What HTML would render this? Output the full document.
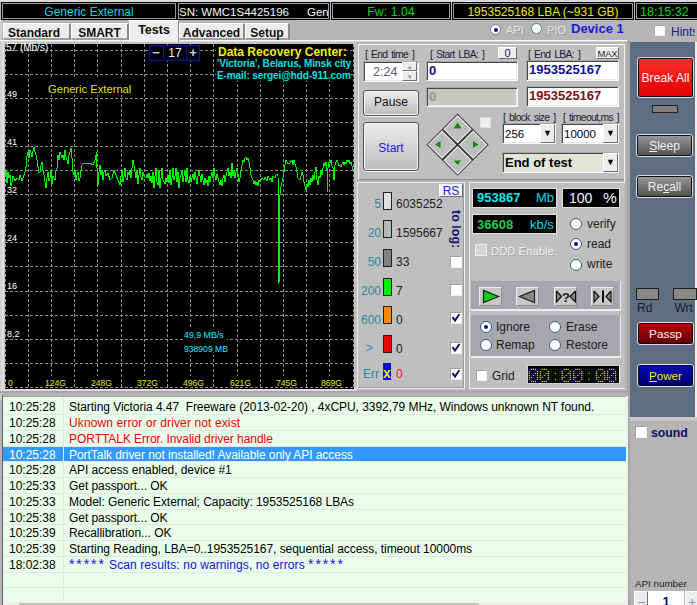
<!DOCTYPE html>
<html><head><meta charset="utf-8">
<style>
*{margin:0;padding:0;box-sizing:border-box}
html,body{width:697px;height:605px;overflow:hidden;background:#b5b5b5;font-family:"Liberation Sans",sans-serif;font-size:12px;color:#000}
.a{position:absolute}
.blk{position:absolute;background:#000;border:1px solid #000;box-shadow:inset 0 0 0 1px #9a9a9a;text-align:center;white-space:nowrap;font-size:12px;line-height:18px}
.tab{position:absolute;top:23px;height:17px;background:#ececec;border-left:1px solid #fff;border-top:1px solid #fff;border-right:2px solid #8a8a8a;border-bottom:2px solid #a0a0a0;font-weight:bold;font-size:12px;line-height:18px;text-align:center;color:#111}
.gl{position:absolute;color:#fff;font-size:9px;line-height:9px;white-space:nowrap}
.xl{position:absolute;color:#e8e800;font-size:8.6px;line-height:15px;height:11px;overflow:hidden;padding:0 1px;background:#000;white-space:nowrap}
.lbl{position:absolute;font-size:10.4px;line-height:12px;color:#1a1a3a;white-space:nowrap;letter-spacing:-0.68px;word-spacing:1.6px;transform:scaleY(1.08);transform-origin:0 100%;margin-top:1px}
.inp{position:absolute;background:#fff;border-top:1px solid #a8a8a8;border-left:1px solid #a8a8a8;border-right:1px solid #fafafa;border-bottom:1px solid #fafafa;box-shadow:inset 1px 1px 0 #484848, inset -1px -1px 0 #e8e8e8}
.btn{position:absolute;border:1px solid #555;border-radius:3px;background:linear-gradient(#ececec,#bcbcbc);box-shadow:inset 0 0 0 1px #f2f2f2, 0 1px 0 #f4f4f4;text-align:center;white-space:nowrap}
.sbtn{position:absolute;background:#ececec;border-left:1px solid #fff;border-top:1px solid #fff;border-right:1px solid #707070;border-bottom:1px solid #707070;text-align:center;font-size:11px;line-height:10px}
.lr{position:absolute;left:3px;width:624px;height:15.75px;border-bottom:1px solid #dfeadf;font-size:12px;line-height:17px;white-space:nowrap}
.lt{position:absolute;left:6px;top:0px}
.lm{position:absolute;left:66px;top:0px;letter-spacing:-0.05px}
.lnum{position:absolute;font-size:12px;line-height:14px;color:#2a8a9a;text-align:right;white-space:nowrap}
.bar{position:absolute;left:383px;width:9px;height:18px;border:1px solid #202020}
.cnt{position:absolute;left:396px;font-size:12px;line-height:14px;color:#202020;white-space:nowrap}
.cb{position:absolute;width:12px;height:12px;background:#fff;border-top:1px solid #a0a0a0;border-left:1px solid #a0a0a0;border-right:1px solid #f0f0f0;border-bottom:1px solid #f0f0f0}
.rd{position:absolute;width:12px;height:12px;border-radius:50%;background:#fff;border:1px solid #3c5a8a}
.rd.on::after{content:"";position:absolute;left:3px;top:3px;width:4px;height:4px;border-radius:50%;background:#101080}
.rtxt{position:absolute;font-size:12px;line-height:14px;color:#202020;white-space:nowrap}
.pb{position:absolute;top:287px;width:23px;height:19px;background:#c8c8c8;border-left:1px solid #f0f0f0;border-top:1px solid #f0f0f0;border-right:1px solid #909090;border-bottom:1px solid #909090}
.rbtn{position:absolute;left:637px;width:57px;border:1px solid #d8dce4;border-radius:3px;box-shadow:inset 0 0 0 1px #101010;text-align:center;white-space:nowrap}
</style></head><body>
<!-- top strip -->
<div class="a" style="left:0;top:0;width:697px;height:2px;background:#dadada"></div>
<div class="a" style="left:0;top:20px;width:2px;height:380px;background:#d0d0d0"></div>
<div class="blk" style="left:1px;top:2px;width:176px;height:18px;color:#00d8d8">Generic External</div>
<div class="blk" style="left:177px;top:2px;width:153px;height:18px;color:#f4f4f4;text-align:left;padding-left:1px;font-size:11.5px">SN: WMC1S4425196<span style="position:absolute;left:129px">Gen</span></div>
<div class="blk" style="left:331px;top:2px;width:120px;height:18px;color:#00d800;font-size:12.4px">Fw: 1.04</div>
<div class="blk" style="left:452px;top:2px;width:182px;height:18px;color:#e8e800">1953525168 LBA (~931 GB)</div>
<div class="blk" style="left:635px;top:2px;width:64px;height:18px;color:#00d800;text-align:left;padding-left:4px;font-size:12.5px">18:15:32</div>

<!-- tabs -->
<div class="tab" style="left:3px;width:68px;padding-right:5px">Standard</div>
<div class="tab" style="left:71px;width:58px">SMART</div>
<div class="tab" style="left:245px;width:45px">Setup</div>
<div class="tab" style="left:179px;width:66px">Advanced</div>
<div class="a" style="left:0;top:40px;width:627px;height:1px;background:#fafafa"></div><div class="a" style="left:0;top:41px;width:627px;height:1px;background:#d4d4d4"></div>
<div class="tab" style="left:129px;top:20px;height:22px;width:50px;border-bottom:none;border-right:1px solid #8a8a8a;background:#eeeeee;line-height:18px;font-size:12.5px">Tests</div>

<!-- API / PIO / Device / Hints -->
<div class="rd on" style="left:490px;top:24px;width:11px;height:11px;border-color:#6a7a9a"></div>
<div class="a" style="left:506px;top:24px;font-size:11px;line-height:12px;color:#e8e8e8;text-shadow:1px 1px 0 #9a9a9a">API</div>
<div class="rd" style="left:531px;top:23px;width:11px;height:11px;border-color:#6a7a9a"></div>
<div class="a" style="left:547px;top:24px;font-size:11px;line-height:12px;color:#e8e8e8;text-shadow:1px 1px 0 #9a9a9a">PIO</div>
<div class="a" style="left:571px;top:22px;font-size:13px;line-height:14px;color:#1a1ae0;font-weight:bold">Device 1</div>
<div class="cb" style="left:654px;top:25px;width:11px;height:11px"></div>
<div class="a" style="left:671px;top:26px;width:24px;overflow:hidden;font-size:12px;line-height:12px;color:#1a1a80;white-space:nowrap">Hints</div>

<!-- graph -->
<div class="a" style="left:3px;top:42px;width:354px;height:349px;background:#c2c2c2"></div><div class="a" style="left:2px;top:42px;width:2px;height:349px;background:#dedede"></div><div class="a" style="left:3px;top:388px;width:354px;height:3px;background:#dcdcdc"></div>
<div class="a" style="left:5px;top:44px;width:349px;height:345px;background:#000"></div>
<svg class="a" style="left:0;top:0" width="697" height="605">
<g stroke="#8e8e8e" stroke-width="1" stroke-dasharray="3,2" fill="none" shape-rendering="crispEdges">
<line x1="5.5" y1="44" x2="5.5" y2="389" />
<line x1="28.5" y1="44" x2="28.5" y2="389" />
<line x1="51.5" y1="44" x2="51.5" y2="389" />
<line x1="74.5" y1="44" x2="74.5" y2="389" />
<line x1="97.5" y1="44" x2="97.5" y2="389" />
<line x1="121.5" y1="44" x2="121.5" y2="389" />
<line x1="144.5" y1="44" x2="144.5" y2="389" />
<line x1="167.5" y1="44" x2="167.5" y2="389" />
<line x1="190.5" y1="44" x2="190.5" y2="389" />
<line x1="213.5" y1="44" x2="213.5" y2="389" />
<line x1="237.5" y1="44" x2="237.5" y2="389" />
<line x1="260.5" y1="44" x2="260.5" y2="389" />
<line x1="283.5" y1="44" x2="283.5" y2="389" />
<line x1="306.5" y1="44" x2="306.5" y2="389" />
<line x1="329.5" y1="44" x2="329.5" y2="389" />
<line x1="353.5" y1="44" x2="353.5" y2="389" />
<line x1="5" y1="50.5" x2="354" y2="50.5" />
<line x1="5" y1="74.5" x2="354" y2="74.5" />
<line x1="5" y1="98.5" x2="354" y2="98.5" />
<line x1="5" y1="122.5" x2="354" y2="122.5" />
<line x1="5" y1="146.5" x2="354" y2="146.5" />
<line x1="5" y1="170.5" x2="354" y2="170.5" />
<line x1="5" y1="194.5" x2="354" y2="194.5" />
<line x1="5" y1="218.5" x2="354" y2="218.5" />
<line x1="5" y1="242.5" x2="354" y2="242.5" />
<line x1="5" y1="266.5" x2="354" y2="266.5" />
<line x1="5" y1="291.5" x2="354" y2="291.5" />
<line x1="5" y1="315.5" x2="354" y2="315.5" />
<line x1="5" y1="339.5" x2="354" y2="339.5" />
<line x1="5" y1="363.5" x2="354" y2="363.5" />
<line x1="5" y1="387.5" x2="354" y2="387.5" />
</g>
<polyline points="5,176 6,170 7,183 8,172 9,178 10,175 11,186 12,182 13,176 15,181 17,178 19,180 20,175 22,181 23,178 25,172 26,167 27,156 28,152 29,158 30,150 31,153 32,157 33,151 34,147 35,152 36,155 37,160 38,167 39,173 40,172 41,165 42,162 43,170 44,175 45,182 46,188 47,178 48,172 49,181 50,178 51,170 52,184 53,176 55,180 56,170 57,168 58,155 59,160 60,152 62,158 63,155 64,160 65,150 66,157 67,160 68,164 69,155 70,152 71,148 72,158 72.5,165 73,172 74,175 75,170 76,180 77,175 78,172 79,181 80,178 81,170 82,165 84,163 87,164 90,163 93,165 95,160 96,155 96.5,152 97,168 98,185 99,172 100,165 101,175 102,170 103,180 104,172 105,170 106,176 108,173 110,180 112,178 114,170 116,175 118,180 120,185 121,176 122,170 123,182 124,176 125,168 126,178 127,180 128,172 129,175 130,170 131,178 132,168 133,160 134,165 135,172 136,178 137,170 138,184 139,175 140,168 141,177 142,180 143,172 144,176 146,178 147,174 148,178 149,173 150,181 151,176 152,183 153,172 154,188 155,176 156,168 157,182 158,185 159,170 160,188 161,178 162,168 163,180 165,184 166,178 167,182 168,175 169,183 170,170 171,185 172,178 173,168 174,180 175,176 176,168 177,182 178,172 179,188 180,178 181,175 182,170 183,182 184,176 185,170 186,182 187,168 188,180 189,183 190,176 191,182 192,178 193,174 194,180 195,172 196,178 197,184 198,176 199,170 200,176 201,182 202,174 203,180 204,185 205,178 206,183 207,180 208,186 209,176 210,182 211,176 212,172 213,178 214,168 215,176 216,180 217,174 218,178 219,182 220,185 221,180 222,186 223,178 224,175 225,182 226,176 227,172 228,168 229,176 230,172 231,178 232,163 233,176 234,170 235,178 236,172 237,168 238,174 239,182 240,178 241,170 242,165 243,160 244,162 245,158 246,157 247,160 248,158 249,162 250,168 251,175 252,178 253,180 254,184 255,181 256,185 257,182 258,186 259,180 260,182 262,178 264,180 265,177 267,181 268,176 270,180 271,178 272,182 273,176 275,178 276,175 277,174 278,176 279,284 280,195 281,186 282,182 283,178 284,172 285,165 286,160 288,164 290,163 292,160 293,165 294,160 295,164 296,167 297,172 298,178 300,180 301,176 302,172 303,175 304,182 305,186 306,190 307,184 308,187 309,180 310,185 311,178 312,182 313,175 314,180 315,172 316,167 317,180 318,185 319,176 320,178 321,170 322,175 323,168 324,163 325,166 326,162 327,170 327.5,192 328,168 329,162 330,163 331,160 332,166 333,168 334,180 335,165 336,162 337,160 338,163 339,166 340,165 341,167 342,164 343,162 344,165 345,162 346,164 347,160 348,162 349,160 350,164 351,162 352,166 353,170" fill="none" stroke="#00f000" stroke-width="1" shape-rendering="crispEdges" />
</svg>
<div class="gl" style="left:6px;top:43px"><span style="font-size:10px">57 (Mb/s)</span></div>
<div class="gl" style="left:7px;top:90px">49</div>
<div class="gl" style="left:7px;top:138px">41</div>
<div class="gl" style="left:7px;top:186px">32</div>
<div class="gl" style="left:7px;top:234px">24</div>
<div class="gl" style="left:7px;top:282px">16</div>
<div class="gl" style="left:7px;top:330px">8,2</div>
<div class="xl" style="left:7px;top:376px">0</div>
<div class="xl" style="left:44px;top:376px">124G</div>
<div class="xl" style="left:90px;top:376px">248G</div>
<div class="xl" style="left:136px;top:376px">372G</div>
<div class="xl" style="left:182px;top:376px">496G</div>
<div class="xl" style="left:229px;top:376px">621G</div>
<div class="xl" style="left:275px;top:376px">745G</div>
<div class="xl" style="left:320px;top:376px">869G</div>
<div class="a" style="left:46px;top:77px;width:86px;height:18px;background:#000"></div><div class="a" style="left:48px;top:83px;font-size:11.2px;line-height:12px;color:#e0e000;white-space:nowrap">Generic External</div>
<div class="a" style="left:149px;top:45px;width:51px;height:16px;border:1px solid #10108a;box-shadow:inset 0 0 0 1px #000050;background:#000"></div>
<div class="a" style="left:163px;top:45px;width:24px;height:16px;border-left:1px solid #10108a;border-right:1px solid #10108a;color:#f4f4f4;font-size:12px;line-height:17px;text-align:center">17</div>
<div class="a" style="left:149px;top:45px;width:14px;height:16px;color:#c8d0e8;font-size:13px;line-height:15px;text-align:center;font-weight:bold">&minus;</div>
<div class="a" style="left:186px;top:45px;width:14px;height:16px;color:#c8d0e8;font-size:13px;line-height:16px;text-align:center;font-weight:bold">+</div>
<div class="a" style="left:216px;top:44px;width:130px;height:14px;background:#000"></div><div class="a" style="left:216px;top:57px;width:135px;height:24px;background:#000"></div><div class="a" style="left:218px;top:46px;font-size:12px;line-height:13px;color:#f0f000;font-weight:bold;white-space:nowrap">Data Recovery Center:</div>
<div class="a" style="left:217px;top:58px;font-size:10px;line-height:11px;color:#00e0e0;font-weight:bold;white-space:nowrap;letter-spacing:-0.1px">'Victoria', Belarus, Minsk city</div>
<div class="a" style="left:217px;top:70px;font-size:10px;line-height:11px;color:#00e0e0;font-weight:bold;white-space:nowrap;letter-spacing:-0.1px">E-mail: sergei@hdd-911.com</div>
<div class="a" style="left:183px;top:329px;width:44px;height:26px;background:#000"></div><div class="a" style="left:184px;top:331px;font-size:8.8px;line-height:9px;color:#10ecff;white-space:nowrap">49,9 MB/s</div>
<div class="a" style="left:184px;top:345px;font-size:8.6px;line-height:9px;color:#10ecff;white-space:nowrap">938909 MB</div>

<!-- controls panel outer -->
<div class="a" style="left:358px;top:44px;width:267px;height:136px;border-left:1px solid #f4f4f4;border-top:1px solid #f4f4f4;border-bottom:1px solid #909090;background:#bfbfbf"></div>
<div class="a" style="left:624px;top:44px;width:1px;height:345px;background:#f0f0f0"></div>
<div class="a" style="left:627px;top:40px;width:3px;height:356px;background:#a8a8a8"></div>

<div class="lbl" style="left:365px;top:48px">[ End time ]</div>
<div class="inp" style="left:363px;top:61px;width:56px;height:21px"></div>
<div class="a" style="left:373px;top:65px;font-size:12.6px;line-height:14px;color:#585870">2:24</div>
<div class="sbtn" style="left:402px;top:62px;width:15px;height:9px;font-size:7px;line-height:8px;color:#909090">&#9652;</div>
<div class="sbtn" style="left:402px;top:71px;width:15px;height:10px;font-size:7px;line-height:9px;color:#909090">&#9662;</div>

<div class="lbl" style="left:430px;top:48px">[ Start LBA: ]</div>
<div class="sbtn" style="left:498px;top:47px;width:19px;height:12px;font-size:11px;line-height:10px;color:#1a1a60">0</div>
<div class="inp" style="left:426px;top:61px;width:92px;height:20px"></div>
<div class="a" style="left:429px;top:63px;font-size:13px;line-height:15px;color:#101090;font-weight:bold">0</div>
<div class="inp" style="left:426px;top:87px;width:92px;height:20px;background:#c8c8c2"></div>
<div class="a" style="left:429px;top:89px;font-size:13px;line-height:15px;color:#909aa0;font-weight:bold">0</div>

<div class="lbl" style="left:528px;top:48px">[ End LBA: ]</div>
<div class="sbtn" style="left:596px;top:47px;width:23px;height:12px;font-size:9.5px;line-height:11px;color:#202040;letter-spacing:-0.2px">MAX</div>
<div class="inp" style="left:526px;top:60px;width:93px;height:21px"></div>
<div class="a" style="left:529px;top:62px;font-size:13px;line-height:15px;color:#101090;font-weight:bold">1953525167</div>
<div class="inp" style="left:526px;top:86px;width:93px;height:21px"></div>
<div class="a" style="left:529px;top:88px;font-size:13px;line-height:15px;color:#801010;font-weight:bold">1953525167</div>

<div class="btn" style="left:363px;top:90px;width:56px;height:26px;font-size:12px;line-height:23px;color:#101020">Pause</div>
<div class="btn" style="left:363px;top:122px;width:56px;height:49px;font-size:12px;line-height:50px;color:#1a1ae8">Start</div>

<!-- diamond -->
<svg class="a" style="left:420px;top:108px" width="76" height="74">
<g transform="translate(37.6,36.7) rotate(45)">
<rect x="-22" y="-22" width="44" height="44" fill="#3a3a3a"/>
<rect x="-20.5" y="-20.5" width="19" height="19" fill="#bdbdbd" stroke="#f4f4f4" stroke-width="1"/>
<rect x="1.5" y="-20.5" width="19" height="19" fill="#bdbdbd" stroke="#f4f4f4" stroke-width="1"/>
<rect x="-20.5" y="1.5" width="19" height="19" fill="#bdbdbd" stroke="#f4f4f4" stroke-width="1"/>
<rect x="1.5" y="1.5" width="19" height="19" fill="#bdbdbd" stroke="#f4f4f4" stroke-width="1"/>
</g>
<polygon points="37.6,14.5 33.6,20.5 41.6,20.5" fill="#108a10"/>
<polygon points="37.6,57 34.1,52.5 41.1,52.5" fill="#108a10"/>
<polygon points="15,36.5 20.5,33 20.5,40" fill="#108a10"/>
<polygon points="58.5,36.5 53,33 53,40" fill="#108a10"/>
</svg>
<div class="cb" style="left:480px;top:117px;width:11px;height:11px;background:#eeeeee;border:1px solid #e0e0e0"></div>

<div class="lbl" style="left:503px;top:111px">[ block size ]</div>
<div class="inp" style="left:502px;top:123px;width:54px;height:21px"></div>
<div class="a" style="left:505px;top:128px;font-size:11.5px;line-height:13px;color:#000">256</div>
<div class="sbtn" style="left:540px;top:124px;width:15px;height:19px;font-size:9px;line-height:17px;color:#000">&#9660;</div>
<div class="lbl" style="left:563px;top:111px">[ timeout,ms ]</div>
<div class="inp" style="left:561px;top:123px;width:58px;height:21px"></div>
<div class="a" style="left:564px;top:128px;font-size:11.5px;line-height:13px;color:#000">10000</div>
<div class="sbtn" style="left:603px;top:124px;width:15px;height:19px;font-size:9px;line-height:17px;color:#000">&#9660;</div>
<div class="inp" style="left:502px;top:152px;width:117px;height:21px;background:#e2e4d8"></div>
<div class="a" style="left:505px;top:155px;font-size:13px;line-height:15px;color:#000;font-weight:bold">End of test</div>
<div class="sbtn" style="left:603px;top:153px;width:15px;height:19px;font-size:9px;line-height:17px;color:#000">&#9660;</div>

<!-- legend panel -->
<div class="a" style="left:357px;top:182px;width:108px;height:207px;border-left:1px solid #ececec;border-top:1px solid #ececec;border-right:1px solid #f0f0f0;border-bottom:1px solid #f0f0f0;background:#bfbfbf;box-shadow:inset -1px -1px 0 #9a9a9a"></div>
<div class="sbtn" style="left:439px;top:184px;width:24px;height:13px;font-size:12px;line-height:12px;color:#1a1ae0;background:#f4f4f4">RS</div>
<div class="lnum" style="left:350px;top:197px;width:31px">5</div>
<div class="bar" style="top:192px;background:#e0e0e0"></div>
<div class="cnt" style="top:197px">6035252</div>
<div class="lnum" style="left:350px;top:226px;width:31px">20</div>
<div class="bar" style="top:220px;background:#b8b8b8"></div>
<div class="cnt" style="top:226px">1595667</div>
<div class="lnum" style="left:350px;top:255px;width:31px">50</div>
<div class="bar" style="top:249px;background:#808080"></div>
<div class="cnt" style="top:255px">33</div>
<div class="lnum" style="left:350px;top:284px;width:31px">200</div>
<div class="bar" style="top:278px;background:#00ee00"></div>
<div class="cnt" style="top:284px">7</div>
<div class="lnum" style="left:350px;top:313px;width:31px">600</div>
<div class="bar" style="top:306px;background:#ff8800"></div>
<div class="cnt" style="top:313px">0</div>
<div class="lnum" style="left:366px;top:341px;text-align:left">&gt;</div>
<div class="bar" style="top:335px;background:#ee0000"></div>
<div class="cnt" style="top:342px">0</div>
<div class="lnum" style="left:349px;top:367px;width:30px">Err</div>
<div class="a" style="left:383px;top:363px;width:8px;height:17px;background:#0a0aee;color:#f0f000;font-weight:bold;font-size:14px;line-height:20px;text-align:center;overflow:hidden;letter-spacing:0">x</div>
<div class="cnt" style="top:367px;color:#e82020">0</div>
<div class="a" style="left:444px;top:222px;width:20px;height:20px;transform:rotate(90deg);transform-origin:0 0"></div>
<div class="a" style="left:463px;top:210px;font-size:12.5px;line-height:14px;color:#14146e;font-weight:bold;transform:rotate(90deg);transform-origin:0 0;white-space:nowrap">to log:</div>
<div class="cb" style="left:450px;top:256px"></div>
<div class="cb" style="left:450px;top:284px"></div>
<div class="cb" style="left:450px;top:312px"></div>
<div class="cb" style="left:450px;top:342px"></div>
<div class="cb" style="left:450px;top:368px"></div>
<svg class="a" style="left:0;top:0" width="697" height="605">
<g fill="none" stroke="#101060" stroke-width="2">
<polyline points="452.5,317 455,320.5 459.5,314"/>
<polyline points="452.5,347 455,350.5 459.5,344"/>
<polyline points="452.5,373 455,376.5 459.5,370"/>
</g>
</svg>

<!-- stats panel -->
<div class="a" style="left:469px;top:182px;width:156px;height:207px;border-left:1px solid #ececec;border-top:1px solid #ececec;border-bottom:1px solid #f0f0f0;background:#bfbfbf"></div>
<div class="blk" style="left:473px;top:189px;width:83px;height:18px;box-shadow:0 0 0 1px #e0e0e0"></div>
<div class="a" style="left:477px;top:190px;font-size:13px;line-height:15px;color:#00e8f0;font-weight:bold">953867</div>
<div class="a" style="left:536px;top:190px;font-size:13px;line-height:15px;color:#00d8e0">Mb</div>
<div class="blk" style="left:563px;top:189px;width:56px;height:18px;box-shadow:0 0 0 1px #e0e0e0"></div>
<div class="a" style="left:569px;top:190px;font-size:14px;line-height:16px;color:#f4f4f4">100</div><div class="a" style="left:603px;top:189px;font-size:15.5px;line-height:17px;color:#f4f4f4">%</div>
<div class="blk" style="left:473px;top:215px;width:83px;height:18px;box-shadow:0 0 0 1px #e0e0e0"></div>
<div class="a" style="left:477px;top:217px;font-size:13px;line-height:15px;color:#28c848;font-weight:bold">36608</div>
<div class="a" style="left:530px;top:217px;font-size:13px;line-height:15px;color:#00d8e0">kb/s</div>
<div class="rd" style="left:570px;top:218px"></div>
<div class="rtxt" style="left:587px;top:217px">verify</div>
<div class="rd on" style="left:570px;top:238px"></div>
<div class="rtxt" style="left:587px;top:237px">read</div>
<div class="rd" style="left:570px;top:259px"></div>
<div class="rtxt" style="left:587px;top:257px">write</div>
<div class="cb" style="left:475px;top:244px;background:#d6d6d6;border:1px solid #ececec;width:12px;height:12px"></div>
<div class="a" style="left:491px;top:244px;font-size:11.3px;line-height:14px;color:#f0f0f0;text-shadow:1px 1px 0 #a8a8a8;white-space:nowrap">DDD Enable</div>

<div class="a" style="left:471px;top:281px;width:150px;height:30px;background:#a6a6ac;border-bottom:2px solid #ececec;border-right:1px solid #ececec"></div>
<div class="pb" style="left:479px"></div>
<div class="pb" style="left:516px"></div>
<div class="pb" style="left:554px"></div>
<div class="pb" style="left:591px"></div>
<svg class="a" style="left:0;top:0" width="697" height="605">
<polygon points="483.5,290.5 483.5,302.5 498.5,296.5" fill="#10d010" stroke="#102010" stroke-width="1.2"/>
<polygon points="534.5,290.5 534.5,302.5 519.5,296.5" fill="#888" stroke="#202020" stroke-width="1.2"/>
<g fill="#8a8a8a" stroke="#101010" stroke-width="1.2">
<polyline points="556.5,291 561.5,296.5 556.5,302 556.5,291"/>
<polyline points="575.5,291 570,296.5 575.5,302 575.5,291"/>
<polyline points="594,291 599,296.5 594,302 594,291"/>
<line x1="603" y1="290.5" x2="603" y2="302.5" stroke-width="2"/>
<polyline points="611,291 606,296.5 611,302 611,291"/>
</g>
<text x="561.8" y="302" font-family="Liberation Sans" font-weight="bold" font-size="13.5" fill="#202020">?</text>
</svg>

<div class="a" style="left:471px;top:315px;width:150px;height:43px;background:#a6a6ac;border-bottom:2px solid #ececec;border-right:1px solid #ececec"></div>
<div class="rd on" style="left:480px;top:321px"></div>
<div class="rtxt" style="left:496px;top:320px">Ignore</div>
<div class="rd" style="left:549px;top:321px"></div>
<div class="rtxt" style="left:566px;top:320px">Erase</div>
<div class="rd" style="left:480px;top:339px"></div>
<div class="rtxt" style="left:496px;top:338px">Remap</div>
<div class="rd" style="left:549px;top:339px"></div>
<div class="rtxt" style="left:566px;top:338px">Restore</div>

<div class="cb" style="left:476px;top:370px;width:11px;height:11px"></div>
<div class="rtxt" style="left:492px;top:369px">Grid</div>
<div class="a" style="left:527px;top:365px;width:93px;height:19px;background:#000;border:1px solid #d0d0d0;border-right-color:#f0f0f0"></div>
<svg class="a" style="left:0;top:0" width="697" height="605"><g fill="#0e2a00"><rect x="528.85" y="368.85" width="1.1" height="1.1"/><rect x="528.85" y="370.85" width="1.1" height="1.1"/><rect x="528.85" y="372.85" width="1.1" height="1.1"/><rect x="528.85" y="374.85" width="1.1" height="1.1"/><rect x="528.85" y="376.85" width="1.1" height="1.1"/><rect x="528.85" y="378.85" width="1.1" height="1.1"/><rect x="528.85" y="380.85" width="1.1" height="1.1"/><rect x="530.85" y="368.85" width="1.1" height="1.1"/><rect x="530.85" y="370.85" width="1.1" height="1.1"/><rect x="530.85" y="372.85" width="1.1" height="1.1"/><rect x="530.85" y="374.85" width="1.1" height="1.1"/><rect x="530.85" y="376.85" width="1.1" height="1.1"/><rect x="530.85" y="378.85" width="1.1" height="1.1"/><rect x="530.85" y="380.85" width="1.1" height="1.1"/><rect x="532.85" y="368.85" width="1.1" height="1.1"/><rect x="532.85" y="370.85" width="1.1" height="1.1"/><rect x="532.85" y="372.85" width="1.1" height="1.1"/><rect x="532.85" y="374.85" width="1.1" height="1.1"/><rect x="532.85" y="376.85" width="1.1" height="1.1"/><rect x="532.85" y="378.85" width="1.1" height="1.1"/><rect x="532.85" y="380.85" width="1.1" height="1.1"/><rect x="534.85" y="368.85" width="1.1" height="1.1"/><rect x="534.85" y="370.85" width="1.1" height="1.1"/><rect x="534.85" y="372.85" width="1.1" height="1.1"/><rect x="534.85" y="374.85" width="1.1" height="1.1"/><rect x="534.85" y="376.85" width="1.1" height="1.1"/><rect x="534.85" y="378.85" width="1.1" height="1.1"/><rect x="534.85" y="380.85" width="1.1" height="1.1"/><rect x="536.85" y="368.85" width="1.1" height="1.1"/><rect x="536.85" y="370.85" width="1.1" height="1.1"/><rect x="536.85" y="372.85" width="1.1" height="1.1"/><rect x="536.85" y="374.85" width="1.1" height="1.1"/><rect x="536.85" y="376.85" width="1.1" height="1.1"/><rect x="536.85" y="378.85" width="1.1" height="1.1"/><rect x="536.85" y="380.85" width="1.1" height="1.1"/><rect x="538.85" y="368.85" width="1.1" height="1.1"/><rect x="538.85" y="370.85" width="1.1" height="1.1"/><rect x="538.85" y="372.85" width="1.1" height="1.1"/><rect x="538.85" y="374.85" width="1.1" height="1.1"/><rect x="538.85" y="376.85" width="1.1" height="1.1"/><rect x="538.85" y="378.85" width="1.1" height="1.1"/><rect x="538.85" y="380.85" width="1.1" height="1.1"/><rect x="540.85" y="368.85" width="1.1" height="1.1"/><rect x="540.85" y="370.85" width="1.1" height="1.1"/><rect x="540.85" y="372.85" width="1.1" height="1.1"/><rect x="540.85" y="374.85" width="1.1" height="1.1"/><rect x="540.85" y="376.85" width="1.1" height="1.1"/><rect x="540.85" y="378.85" width="1.1" height="1.1"/><rect x="540.85" y="380.85" width="1.1" height="1.1"/><rect x="542.85" y="368.85" width="1.1" height="1.1"/><rect x="542.85" y="370.85" width="1.1" height="1.1"/><rect x="542.85" y="372.85" width="1.1" height="1.1"/><rect x="542.85" y="374.85" width="1.1" height="1.1"/><rect x="542.85" y="376.85" width="1.1" height="1.1"/><rect x="542.85" y="378.85" width="1.1" height="1.1"/><rect x="542.85" y="380.85" width="1.1" height="1.1"/><rect x="544.85" y="368.85" width="1.1" height="1.1"/><rect x="544.85" y="370.85" width="1.1" height="1.1"/><rect x="544.85" y="372.85" width="1.1" height="1.1"/><rect x="544.85" y="374.85" width="1.1" height="1.1"/><rect x="544.85" y="376.85" width="1.1" height="1.1"/><rect x="544.85" y="378.85" width="1.1" height="1.1"/><rect x="544.85" y="380.85" width="1.1" height="1.1"/><rect x="546.85" y="368.85" width="1.1" height="1.1"/><rect x="546.85" y="370.85" width="1.1" height="1.1"/><rect x="546.85" y="372.85" width="1.1" height="1.1"/><rect x="546.85" y="374.85" width="1.1" height="1.1"/><rect x="546.85" y="376.85" width="1.1" height="1.1"/><rect x="546.85" y="378.85" width="1.1" height="1.1"/><rect x="546.85" y="380.85" width="1.1" height="1.1"/><rect x="548.85" y="368.85" width="1.1" height="1.1"/><rect x="548.85" y="370.85" width="1.1" height="1.1"/><rect x="548.85" y="372.85" width="1.1" height="1.1"/><rect x="548.85" y="374.85" width="1.1" height="1.1"/><rect x="548.85" y="376.85" width="1.1" height="1.1"/><rect x="548.85" y="378.85" width="1.1" height="1.1"/><rect x="548.85" y="380.85" width="1.1" height="1.1"/><rect x="550.85" y="368.85" width="1.1" height="1.1"/><rect x="550.85" y="370.85" width="1.1" height="1.1"/><rect x="550.85" y="372.85" width="1.1" height="1.1"/><rect x="550.85" y="374.85" width="1.1" height="1.1"/><rect x="550.85" y="376.85" width="1.1" height="1.1"/><rect x="550.85" y="378.85" width="1.1" height="1.1"/><rect x="550.85" y="380.85" width="1.1" height="1.1"/><rect x="552.85" y="368.85" width="1.1" height="1.1"/><rect x="552.85" y="370.85" width="1.1" height="1.1"/><rect x="552.85" y="372.85" width="1.1" height="1.1"/><rect x="552.85" y="374.85" width="1.1" height="1.1"/><rect x="552.85" y="376.85" width="1.1" height="1.1"/><rect x="552.85" y="378.85" width="1.1" height="1.1"/><rect x="552.85" y="380.85" width="1.1" height="1.1"/><rect x="554.85" y="368.85" width="1.1" height="1.1"/><rect x="554.85" y="370.85" width="1.1" height="1.1"/><rect x="554.85" y="372.85" width="1.1" height="1.1"/><rect x="554.85" y="374.85" width="1.1" height="1.1"/><rect x="554.85" y="376.85" width="1.1" height="1.1"/><rect x="554.85" y="378.85" width="1.1" height="1.1"/><rect x="554.85" y="380.85" width="1.1" height="1.1"/><rect x="556.85" y="368.85" width="1.1" height="1.1"/><rect x="556.85" y="370.85" width="1.1" height="1.1"/><rect x="556.85" y="372.85" width="1.1" height="1.1"/><rect x="556.85" y="374.85" width="1.1" height="1.1"/><rect x="556.85" y="376.85" width="1.1" height="1.1"/><rect x="556.85" y="378.85" width="1.1" height="1.1"/><rect x="556.85" y="380.85" width="1.1" height="1.1"/><rect x="558.85" y="368.85" width="1.1" height="1.1"/><rect x="558.85" y="370.85" width="1.1" height="1.1"/><rect x="558.85" y="372.85" width="1.1" height="1.1"/><rect x="558.85" y="374.85" width="1.1" height="1.1"/><rect x="558.85" y="376.85" width="1.1" height="1.1"/><rect x="558.85" y="378.85" width="1.1" height="1.1"/><rect x="558.85" y="380.85" width="1.1" height="1.1"/><rect x="560.85" y="368.85" width="1.1" height="1.1"/><rect x="560.85" y="370.85" width="1.1" height="1.1"/><rect x="560.85" y="372.85" width="1.1" height="1.1"/><rect x="560.85" y="374.85" width="1.1" height="1.1"/><rect x="560.85" y="376.85" width="1.1" height="1.1"/><rect x="560.85" y="378.85" width="1.1" height="1.1"/><rect x="560.85" y="380.85" width="1.1" height="1.1"/><rect x="562.85" y="368.85" width="1.1" height="1.1"/><rect x="562.85" y="370.85" width="1.1" height="1.1"/><rect x="562.85" y="372.85" width="1.1" height="1.1"/><rect x="562.85" y="374.85" width="1.1" height="1.1"/><rect x="562.85" y="376.85" width="1.1" height="1.1"/><rect x="562.85" y="378.85" width="1.1" height="1.1"/><rect x="562.85" y="380.85" width="1.1" height="1.1"/><rect x="564.85" y="368.85" width="1.1" height="1.1"/><rect x="564.85" y="370.85" width="1.1" height="1.1"/><rect x="564.85" y="372.85" width="1.1" height="1.1"/><rect x="564.85" y="374.85" width="1.1" height="1.1"/><rect x="564.85" y="376.85" width="1.1" height="1.1"/><rect x="564.85" y="378.85" width="1.1" height="1.1"/><rect x="564.85" y="380.85" width="1.1" height="1.1"/><rect x="566.85" y="368.85" width="1.1" height="1.1"/><rect x="566.85" y="370.85" width="1.1" height="1.1"/><rect x="566.85" y="372.85" width="1.1" height="1.1"/><rect x="566.85" y="374.85" width="1.1" height="1.1"/><rect x="566.85" y="376.85" width="1.1" height="1.1"/><rect x="566.85" y="378.85" width="1.1" height="1.1"/><rect x="566.85" y="380.85" width="1.1" height="1.1"/><rect x="568.85" y="368.85" width="1.1" height="1.1"/><rect x="568.85" y="370.85" width="1.1" height="1.1"/><rect x="568.85" y="372.85" width="1.1" height="1.1"/><rect x="568.85" y="374.85" width="1.1" height="1.1"/><rect x="568.85" y="376.85" width="1.1" height="1.1"/><rect x="568.85" y="378.85" width="1.1" height="1.1"/><rect x="568.85" y="380.85" width="1.1" height="1.1"/><rect x="570.85" y="368.85" width="1.1" height="1.1"/><rect x="570.85" y="370.85" width="1.1" height="1.1"/><rect x="570.85" y="372.85" width="1.1" height="1.1"/><rect x="570.85" y="374.85" width="1.1" height="1.1"/><rect x="570.85" y="376.85" width="1.1" height="1.1"/><rect x="570.85" y="378.85" width="1.1" height="1.1"/><rect x="570.85" y="380.85" width="1.1" height="1.1"/><rect x="572.85" y="368.85" width="1.1" height="1.1"/><rect x="572.85" y="370.85" width="1.1" height="1.1"/><rect x="572.85" y="372.85" width="1.1" height="1.1"/><rect x="572.85" y="374.85" width="1.1" height="1.1"/><rect x="572.85" y="376.85" width="1.1" height="1.1"/><rect x="572.85" y="378.85" width="1.1" height="1.1"/><rect x="572.85" y="380.85" width="1.1" height="1.1"/><rect x="574.85" y="368.85" width="1.1" height="1.1"/><rect x="574.85" y="370.85" width="1.1" height="1.1"/><rect x="574.85" y="372.85" width="1.1" height="1.1"/><rect x="574.85" y="374.85" width="1.1" height="1.1"/><rect x="574.85" y="376.85" width="1.1" height="1.1"/><rect x="574.85" y="378.85" width="1.1" height="1.1"/><rect x="574.85" y="380.85" width="1.1" height="1.1"/><rect x="576.85" y="368.85" width="1.1" height="1.1"/><rect x="576.85" y="370.85" width="1.1" height="1.1"/><rect x="576.85" y="372.85" width="1.1" height="1.1"/><rect x="576.85" y="374.85" width="1.1" height="1.1"/><rect x="576.85" y="376.85" width="1.1" height="1.1"/><rect x="576.85" y="378.85" width="1.1" height="1.1"/><rect x="576.85" y="380.85" width="1.1" height="1.1"/><rect x="578.85" y="368.85" width="1.1" height="1.1"/><rect x="578.85" y="370.85" width="1.1" height="1.1"/><rect x="578.85" y="372.85" width="1.1" height="1.1"/><rect x="578.85" y="374.85" width="1.1" height="1.1"/><rect x="578.85" y="376.85" width="1.1" height="1.1"/><rect x="578.85" y="378.85" width="1.1" height="1.1"/><rect x="578.85" y="380.85" width="1.1" height="1.1"/><rect x="580.85" y="368.85" width="1.1" height="1.1"/><rect x="580.85" y="370.85" width="1.1" height="1.1"/><rect x="580.85" y="372.85" width="1.1" height="1.1"/><rect x="580.85" y="374.85" width="1.1" height="1.1"/><rect x="580.85" y="376.85" width="1.1" height="1.1"/><rect x="580.85" y="378.85" width="1.1" height="1.1"/><rect x="580.85" y="380.85" width="1.1" height="1.1"/><rect x="582.85" y="368.85" width="1.1" height="1.1"/><rect x="582.85" y="370.85" width="1.1" height="1.1"/><rect x="582.85" y="372.85" width="1.1" height="1.1"/><rect x="582.85" y="374.85" width="1.1" height="1.1"/><rect x="582.85" y="376.85" width="1.1" height="1.1"/><rect x="582.85" y="378.85" width="1.1" height="1.1"/><rect x="582.85" y="380.85" width="1.1" height="1.1"/><rect x="584.85" y="368.85" width="1.1" height="1.1"/><rect x="584.85" y="370.85" width="1.1" height="1.1"/><rect x="584.85" y="372.85" width="1.1" height="1.1"/><rect x="584.85" y="374.85" width="1.1" height="1.1"/><rect x="584.85" y="376.85" width="1.1" height="1.1"/><rect x="584.85" y="378.85" width="1.1" height="1.1"/><rect x="584.85" y="380.85" width="1.1" height="1.1"/><rect x="586.85" y="368.85" width="1.1" height="1.1"/><rect x="586.85" y="370.85" width="1.1" height="1.1"/><rect x="586.85" y="372.85" width="1.1" height="1.1"/><rect x="586.85" y="374.85" width="1.1" height="1.1"/><rect x="586.85" y="376.85" width="1.1" height="1.1"/><rect x="586.85" y="378.85" width="1.1" height="1.1"/><rect x="586.85" y="380.85" width="1.1" height="1.1"/><rect x="588.85" y="368.85" width="1.1" height="1.1"/><rect x="588.85" y="370.85" width="1.1" height="1.1"/><rect x="588.85" y="372.85" width="1.1" height="1.1"/><rect x="588.85" y="374.85" width="1.1" height="1.1"/><rect x="588.85" y="376.85" width="1.1" height="1.1"/><rect x="588.85" y="378.85" width="1.1" height="1.1"/><rect x="588.85" y="380.85" width="1.1" height="1.1"/><rect x="590.85" y="368.85" width="1.1" height="1.1"/><rect x="590.85" y="370.85" width="1.1" height="1.1"/><rect x="590.85" y="372.85" width="1.1" height="1.1"/><rect x="590.85" y="374.85" width="1.1" height="1.1"/><rect x="590.85" y="376.85" width="1.1" height="1.1"/><rect x="590.85" y="378.85" width="1.1" height="1.1"/><rect x="590.85" y="380.85" width="1.1" height="1.1"/><rect x="592.85" y="368.85" width="1.1" height="1.1"/><rect x="592.85" y="370.85" width="1.1" height="1.1"/><rect x="592.85" y="372.85" width="1.1" height="1.1"/><rect x="592.85" y="374.85" width="1.1" height="1.1"/><rect x="592.85" y="376.85" width="1.1" height="1.1"/><rect x="592.85" y="378.85" width="1.1" height="1.1"/><rect x="592.85" y="380.85" width="1.1" height="1.1"/><rect x="594.85" y="368.85" width="1.1" height="1.1"/><rect x="594.85" y="370.85" width="1.1" height="1.1"/><rect x="594.85" y="372.85" width="1.1" height="1.1"/><rect x="594.85" y="374.85" width="1.1" height="1.1"/><rect x="594.85" y="376.85" width="1.1" height="1.1"/><rect x="594.85" y="378.85" width="1.1" height="1.1"/><rect x="594.85" y="380.85" width="1.1" height="1.1"/><rect x="596.85" y="368.85" width="1.1" height="1.1"/><rect x="596.85" y="370.85" width="1.1" height="1.1"/><rect x="596.85" y="372.85" width="1.1" height="1.1"/><rect x="596.85" y="374.85" width="1.1" height="1.1"/><rect x="596.85" y="376.85" width="1.1" height="1.1"/><rect x="596.85" y="378.85" width="1.1" height="1.1"/><rect x="596.85" y="380.85" width="1.1" height="1.1"/><rect x="598.85" y="368.85" width="1.1" height="1.1"/><rect x="598.85" y="370.85" width="1.1" height="1.1"/><rect x="598.85" y="372.85" width="1.1" height="1.1"/><rect x="598.85" y="374.85" width="1.1" height="1.1"/><rect x="598.85" y="376.85" width="1.1" height="1.1"/><rect x="598.85" y="378.85" width="1.1" height="1.1"/><rect x="598.85" y="380.85" width="1.1" height="1.1"/><rect x="600.85" y="368.85" width="1.1" height="1.1"/><rect x="600.85" y="370.85" width="1.1" height="1.1"/><rect x="600.85" y="372.85" width="1.1" height="1.1"/><rect x="600.85" y="374.85" width="1.1" height="1.1"/><rect x="600.85" y="376.85" width="1.1" height="1.1"/><rect x="600.85" y="378.85" width="1.1" height="1.1"/><rect x="600.85" y="380.85" width="1.1" height="1.1"/><rect x="602.85" y="368.85" width="1.1" height="1.1"/><rect x="602.85" y="370.85" width="1.1" height="1.1"/><rect x="602.85" y="372.85" width="1.1" height="1.1"/><rect x="602.85" y="374.85" width="1.1" height="1.1"/><rect x="602.85" y="376.85" width="1.1" height="1.1"/><rect x="602.85" y="378.85" width="1.1" height="1.1"/><rect x="602.85" y="380.85" width="1.1" height="1.1"/><rect x="604.85" y="368.85" width="1.1" height="1.1"/><rect x="604.85" y="370.85" width="1.1" height="1.1"/><rect x="604.85" y="372.85" width="1.1" height="1.1"/><rect x="604.85" y="374.85" width="1.1" height="1.1"/><rect x="604.85" y="376.85" width="1.1" height="1.1"/><rect x="604.85" y="378.85" width="1.1" height="1.1"/><rect x="604.85" y="380.85" width="1.1" height="1.1"/><rect x="606.85" y="368.85" width="1.1" height="1.1"/><rect x="606.85" y="370.85" width="1.1" height="1.1"/><rect x="606.85" y="372.85" width="1.1" height="1.1"/><rect x="606.85" y="374.85" width="1.1" height="1.1"/><rect x="606.85" y="376.85" width="1.1" height="1.1"/><rect x="606.85" y="378.85" width="1.1" height="1.1"/><rect x="606.85" y="380.85" width="1.1" height="1.1"/><rect x="608.85" y="368.85" width="1.1" height="1.1"/><rect x="608.85" y="370.85" width="1.1" height="1.1"/><rect x="608.85" y="372.85" width="1.1" height="1.1"/><rect x="608.85" y="374.85" width="1.1" height="1.1"/><rect x="608.85" y="376.85" width="1.1" height="1.1"/><rect x="608.85" y="378.85" width="1.1" height="1.1"/><rect x="608.85" y="380.85" width="1.1" height="1.1"/><rect x="610.85" y="368.85" width="1.1" height="1.1"/><rect x="610.85" y="370.85" width="1.1" height="1.1"/><rect x="610.85" y="372.85" width="1.1" height="1.1"/><rect x="610.85" y="374.85" width="1.1" height="1.1"/><rect x="610.85" y="376.85" width="1.1" height="1.1"/><rect x="610.85" y="378.85" width="1.1" height="1.1"/><rect x="610.85" y="380.85" width="1.1" height="1.1"/><rect x="612.85" y="368.85" width="1.1" height="1.1"/><rect x="612.85" y="370.85" width="1.1" height="1.1"/><rect x="612.85" y="372.85" width="1.1" height="1.1"/><rect x="612.85" y="374.85" width="1.1" height="1.1"/><rect x="612.85" y="376.85" width="1.1" height="1.1"/><rect x="612.85" y="378.85" width="1.1" height="1.1"/><rect x="612.85" y="380.85" width="1.1" height="1.1"/><rect x="614.85" y="368.85" width="1.1" height="1.1"/><rect x="614.85" y="370.85" width="1.1" height="1.1"/><rect x="614.85" y="372.85" width="1.1" height="1.1"/><rect x="614.85" y="374.85" width="1.1" height="1.1"/><rect x="614.85" y="376.85" width="1.1" height="1.1"/><rect x="614.85" y="378.85" width="1.1" height="1.1"/><rect x="614.85" y="380.85" width="1.1" height="1.1"/><rect x="616.85" y="368.85" width="1.1" height="1.1"/><rect x="616.85" y="370.85" width="1.1" height="1.1"/><rect x="616.85" y="372.85" width="1.1" height="1.1"/><rect x="616.85" y="374.85" width="1.1" height="1.1"/><rect x="616.85" y="376.85" width="1.1" height="1.1"/><rect x="616.85" y="378.85" width="1.1" height="1.1"/><rect x="616.85" y="380.85" width="1.1" height="1.1"/></g><g fill="#d8c800"><rect x="530.80" y="368.80" width="1.3" height="1.3"/><rect x="532.80" y="368.80" width="1.3" height="1.3"/><rect x="534.80" y="368.80" width="1.3" height="1.3"/><rect x="528.80" y="370.80" width="1.3" height="1.3"/><rect x="536.80" y="370.80" width="1.3" height="1.3"/><rect x="528.80" y="372.80" width="1.3" height="1.3"/><rect x="534.80" y="372.80" width="1.3" height="1.3"/><rect x="536.80" y="372.80" width="1.3" height="1.3"/><rect x="528.80" y="374.80" width="1.3" height="1.3"/><rect x="532.80" y="374.80" width="1.3" height="1.3"/><rect x="536.80" y="374.80" width="1.3" height="1.3"/><rect x="528.80" y="376.80" width="1.3" height="1.3"/><rect x="530.80" y="376.80" width="1.3" height="1.3"/><rect x="536.80" y="376.80" width="1.3" height="1.3"/><rect x="528.80" y="378.80" width="1.3" height="1.3"/><rect x="536.80" y="378.80" width="1.3" height="1.3"/><rect x="530.80" y="380.80" width="1.3" height="1.3"/><rect x="532.80" y="380.80" width="1.3" height="1.3"/><rect x="534.80" y="380.80" width="1.3" height="1.3"/><rect x="541.70" y="368.80" width="1.3" height="1.3"/><rect x="543.70" y="368.80" width="1.3" height="1.3"/><rect x="545.70" y="368.80" width="1.3" height="1.3"/><rect x="539.70" y="370.80" width="1.3" height="1.3"/><rect x="547.70" y="370.80" width="1.3" height="1.3"/><rect x="539.70" y="372.80" width="1.3" height="1.3"/><rect x="545.70" y="372.80" width="1.3" height="1.3"/><rect x="547.70" y="372.80" width="1.3" height="1.3"/><rect x="539.70" y="374.80" width="1.3" height="1.3"/><rect x="543.70" y="374.80" width="1.3" height="1.3"/><rect x="547.70" y="374.80" width="1.3" height="1.3"/><rect x="539.70" y="376.80" width="1.3" height="1.3"/><rect x="541.70" y="376.80" width="1.3" height="1.3"/><rect x="547.70" y="376.80" width="1.3" height="1.3"/><rect x="539.70" y="378.80" width="1.3" height="1.3"/><rect x="547.70" y="378.80" width="1.3" height="1.3"/><rect x="541.70" y="380.80" width="1.3" height="1.3"/><rect x="543.70" y="380.80" width="1.3" height="1.3"/><rect x="545.70" y="380.80" width="1.3" height="1.3"/><rect x="563.60" y="368.80" width="1.3" height="1.3"/><rect x="565.60" y="368.80" width="1.3" height="1.3"/><rect x="567.60" y="368.80" width="1.3" height="1.3"/><rect x="561.60" y="370.80" width="1.3" height="1.3"/><rect x="569.60" y="370.80" width="1.3" height="1.3"/><rect x="561.60" y="372.80" width="1.3" height="1.3"/><rect x="567.60" y="372.80" width="1.3" height="1.3"/><rect x="569.60" y="372.80" width="1.3" height="1.3"/><rect x="561.60" y="374.80" width="1.3" height="1.3"/><rect x="565.60" y="374.80" width="1.3" height="1.3"/><rect x="569.60" y="374.80" width="1.3" height="1.3"/><rect x="561.60" y="376.80" width="1.3" height="1.3"/><rect x="563.60" y="376.80" width="1.3" height="1.3"/><rect x="569.60" y="376.80" width="1.3" height="1.3"/><rect x="561.60" y="378.80" width="1.3" height="1.3"/><rect x="569.60" y="378.80" width="1.3" height="1.3"/><rect x="563.60" y="380.80" width="1.3" height="1.3"/><rect x="565.60" y="380.80" width="1.3" height="1.3"/><rect x="567.60" y="380.80" width="1.3" height="1.3"/><rect x="575.10" y="368.80" width="1.3" height="1.3"/><rect x="577.10" y="368.80" width="1.3" height="1.3"/><rect x="579.10" y="368.80" width="1.3" height="1.3"/><rect x="573.10" y="370.80" width="1.3" height="1.3"/><rect x="581.10" y="370.80" width="1.3" height="1.3"/><rect x="573.10" y="372.80" width="1.3" height="1.3"/><rect x="579.10" y="372.80" width="1.3" height="1.3"/><rect x="581.10" y="372.80" width="1.3" height="1.3"/><rect x="573.10" y="374.80" width="1.3" height="1.3"/><rect x="577.10" y="374.80" width="1.3" height="1.3"/><rect x="581.10" y="374.80" width="1.3" height="1.3"/><rect x="573.10" y="376.80" width="1.3" height="1.3"/><rect x="575.10" y="376.80" width="1.3" height="1.3"/><rect x="581.10" y="376.80" width="1.3" height="1.3"/><rect x="573.10" y="378.80" width="1.3" height="1.3"/><rect x="581.10" y="378.80" width="1.3" height="1.3"/><rect x="575.10" y="380.80" width="1.3" height="1.3"/><rect x="577.10" y="380.80" width="1.3" height="1.3"/><rect x="579.10" y="380.80" width="1.3" height="1.3"/><rect x="597.90" y="368.80" width="1.3" height="1.3"/><rect x="599.90" y="368.80" width="1.3" height="1.3"/><rect x="601.90" y="368.80" width="1.3" height="1.3"/><rect x="595.90" y="370.80" width="1.3" height="1.3"/><rect x="603.90" y="370.80" width="1.3" height="1.3"/><rect x="595.90" y="372.80" width="1.3" height="1.3"/><rect x="601.90" y="372.80" width="1.3" height="1.3"/><rect x="603.90" y="372.80" width="1.3" height="1.3"/><rect x="595.90" y="374.80" width="1.3" height="1.3"/><rect x="599.90" y="374.80" width="1.3" height="1.3"/><rect x="603.90" y="374.80" width="1.3" height="1.3"/><rect x="595.90" y="376.80" width="1.3" height="1.3"/><rect x="597.90" y="376.80" width="1.3" height="1.3"/><rect x="603.90" y="376.80" width="1.3" height="1.3"/><rect x="595.90" y="378.80" width="1.3" height="1.3"/><rect x="603.90" y="378.80" width="1.3" height="1.3"/><rect x="597.90" y="380.80" width="1.3" height="1.3"/><rect x="599.90" y="380.80" width="1.3" height="1.3"/><rect x="601.90" y="380.80" width="1.3" height="1.3"/><rect x="608.90" y="368.80" width="1.3" height="1.3"/><rect x="610.90" y="368.80" width="1.3" height="1.3"/><rect x="612.90" y="368.80" width="1.3" height="1.3"/><rect x="606.90" y="370.80" width="1.3" height="1.3"/><rect x="614.90" y="370.80" width="1.3" height="1.3"/><rect x="606.90" y="372.80" width="1.3" height="1.3"/><rect x="612.90" y="372.80" width="1.3" height="1.3"/><rect x="614.90" y="372.80" width="1.3" height="1.3"/><rect x="606.90" y="374.80" width="1.3" height="1.3"/><rect x="610.90" y="374.80" width="1.3" height="1.3"/><rect x="614.90" y="374.80" width="1.3" height="1.3"/><rect x="606.90" y="376.80" width="1.3" height="1.3"/><rect x="608.90" y="376.80" width="1.3" height="1.3"/><rect x="614.90" y="376.80" width="1.3" height="1.3"/><rect x="606.90" y="378.80" width="1.3" height="1.3"/><rect x="614.90" y="378.80" width="1.3" height="1.3"/><rect x="608.90" y="380.80" width="1.3" height="1.3"/><rect x="610.90" y="380.80" width="1.3" height="1.3"/><rect x="612.90" y="380.80" width="1.3" height="1.3"/><rect x="554.80" y="372.80" width="1.3" height="1.3"/><rect x="554.80" y="378.80" width="1.3" height="1.3"/><rect x="588.40" y="372.80" width="1.3" height="1.3"/><rect x="588.40" y="378.80" width="1.3" height="1.3"/></g></svg>

<!-- right dark panel -->
<div class="a" style="left:630px;top:42px;width:65px;height:375px;background:#5e6e82"></div>
<div class="a" style="left:695px;top:42px;width:2px;height:375px;background:#ececec"></div>
<div class="rbtn" style="top:57px;height:41px;background:linear-gradient(#ff3030,#e00000);color:#f4f4f4;font-size:12.2px;line-height:40px">Break All</div>
<div class="a" style="left:652px;top:105px;width:26px;height:8px;background:#808080;border:1px solid #202020"></div>
<div class="rbtn" style="left:636px;top:134px;height:23px;background:linear-gradient(#9a9a9a,#505050);color:#f0f0f0;font-size:12px;line-height:22px"><u>S</u>leep</div>
<div class="rbtn" style="left:636px;top:175px;height:23px;background:linear-gradient(#9a9a9a,#505050);color:#f0f0f0;font-size:12px;line-height:22px">Re<u>c</u>all</div>
<div class="a" style="left:636px;top:288px;width:23px;height:12px;background:#888;border:1px solid #202020"></div>
<div class="a" style="left:673px;top:288px;width:24px;height:12px;background:#888;border:1px solid #202020"></div>
<div class="a" style="left:637px;top:302px;font-size:12px;line-height:13px;color:#181c28">Rd</div>
<div class="a" style="left:674.5px;top:302px;font-size:12px;line-height:13px;color:#181c28">Wrt</div>
<div class="rbtn" style="top:322px;height:23px;background:linear-gradient(#b80808,#600000);color:#f4f4f4;font-size:11.8px;line-height:22px">Passp</div>
<div class="rbtn" style="top:364px;height:23px;background:linear-gradient(#0808b8,#000068);color:#f0f000;font-size:11.6px;line-height:22px"><u>P</u>ower</div>

<!-- log -->
<div class="a" style="left:0;top:391px;width:627px;height:2px;background:#a4a4a4"></div>
<div class="a" style="left:2px;top:395px;width:1px;height:210px;background:#606060"></div>
<div class="a" style="left:3px;top:396px;width:624px;height:207px;background:#eafdea"></div>
<div class="a" style="left:63px;top:396px;width:1px;height:207px;background:#dfeadf"></div>
<div class="lr" style="top:399.4px;"><span class="lt" style="color:#000">10:25:28</span><span class="lm" style="color:#000">Starting Victoria 4.47&nbsp; Freeware (2013-02-20) , 4xCPU, 3392,79 MHz, Windows unknown NT found.</span></div>
<div class="lr" style="top:415.1px;"><span class="lt" style="color:#000">10:25:28</span><span class="lm" style="color:#f00000"><span style="letter-spacing:0.12px">Uknown error or driver not exist</span></span></div>
<div class="lr" style="top:430.9px;"><span class="lt" style="color:#000">10:25:28</span><span class="lm" style="color:#f00000">PORTTALK Error. Invalid driver handle</span></div>
<div class="lr" style="top:446.6px;background:#3399ff;"><span class="lt" style="color:#fff">10:25:28</span><span class="lm" style="color:#fff">PortTalk driver not installed! Available only API access</span></div>
<div class="lr" style="top:462.4px;"><span class="lt" style="color:#000">10:25:28</span><span class="lm" style="color:#000">API access enabled, device #1</span></div>
<div class="lr" style="top:478.1px;"><span class="lt" style="color:#000">10:25:33</span><span class="lm" style="color:#000">Get passport... OK</span></div>
<div class="lr" style="top:493.9px;"><span class="lt" style="color:#000">10:25:33</span><span class="lm" style="color:#000">Model: Generic External; Capacity: 1953525168 LBAs</span></div>
<div class="lr" style="top:509.6px;"><span class="lt" style="color:#000">10:25:38</span><span class="lm" style="color:#000">Get passport... OK</span></div>
<div class="lr" style="top:525.4px;"><span class="lt" style="color:#000">10:25:39</span><span class="lm" style="color:#000">Recallibration... OK</span></div>
<div class="lr" style="top:541.1px;"><span class="lt" style="color:#000">10:25:39</span><span class="lm" style="color:#000">Starting Reading, LBA=0..1953525167, sequential access, timeout 10000ms</span></div>
<div class="lr" style="top:556.9px;"><span class="lt" style="color:#000">18:02:38</span><span class="lm" style="color:#1010e0"><span style="letter-spacing:1.9px;font-size:14px;line-height:10px">*****</span> <span style="letter-spacing:0.1px">Scan results: no warnings, no errors</span> <span style="letter-spacing:1.9px;font-size:14px;line-height:10px">*****</span></span></div>
<div class="lr" style="top:572.6px;"><span class="lt" style="color:#000"></span><span class="lm" style="color:"></span></div>
<div class="lr" style="top:588.4px;"><span class="lt" style="color:#000"></span><span class="lm" style="color:"></span></div>
<div class="a" style="left:63px;top:397px;width:1px;height:206px;background:#dfeadf"></div>
<div class="a" style="left:3px;top:602px;width:624px;height:3px;background:#f0f0f0"></div>
<div class="a" style="left:19px;top:603px;width:460px;height:2px;background:#c4c4c4"></div>

<!-- bottom right panel -->
<div class="a" style="left:626px;top:396px;width:2px;height:209px;background:#f0f0f0"></div><div class="a" style="left:628px;top:396px;width:2px;height:209px;background:#a4a4a4"></div><div class="a" style="left:3px;top:396px;width:623px;height:1px;background:#a0a0a0"></div>
<div class="a" style="left:630px;top:417px;width:67px;height:4px;background:#c8c8c8"></div>
<div class="cb" style="left:635px;top:426px;width:12px;height:12px"></div>
<div class="a" style="left:651px;top:426px;font-size:12.3px;line-height:14px;color:#10106e;font-weight:bold">sound</div>
<div class="a" style="left:635px;top:578px;font-size:9.8px;line-height:12px;color:#202030">API number</div>
<div class="sbtn" style="left:634px;top:591px;width:14px;height:16px;font-size:14px;line-height:20px;color:#7a9ad0;background:#ececec">&minus;</div>
<div class="a" style="left:648px;top:591px;width:36px;height:16px;background:#fff;text-align:center;font-size:13px;line-height:22px;color:#10106e;font-weight:bold">1</div>
<div class="sbtn" style="left:685px;top:591px;width:14px;height:16px;font-size:14px;line-height:20px;color:#7a9ad0;background:#ececec">+</div>
</body></html>
